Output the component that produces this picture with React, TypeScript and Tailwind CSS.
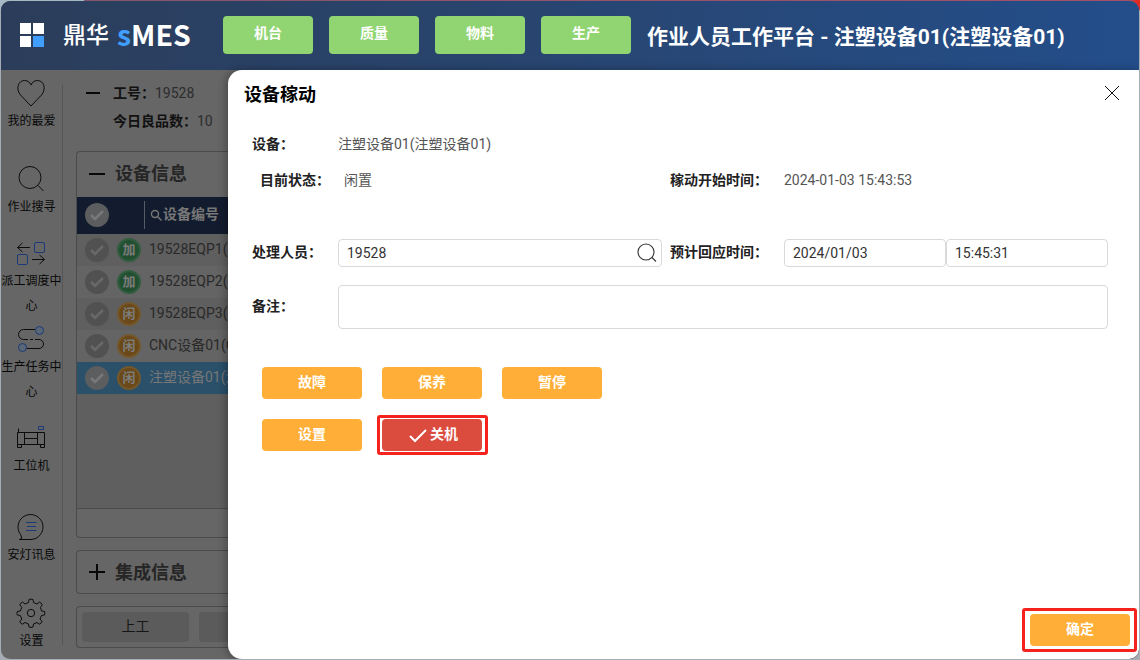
import type { ReactNode } from "react";

const navButtons = ["机台", "质量", "物料", "生产"];

const equipments = [
  { status: "加", name: "19528EQP1(" },
  { status: "加", name: "19528EQP2(" },
  { status: "闲", name: "19528EQP3(" },
  { status: "闲", name: "CNC设备01(C" },
  { status: "闲", name: "注塑设备01(注", selected: true },
];

const Icon = ({ children }: { children: ReactNode }) => (
  <svg className="mr-0.5 h-[30px] w-[30px] shrink-0 overflow-visible" viewBox="0 0 30 30" fill="none" stroke="#0c0c0c" strokeWidth="1">
    {children}
  </svg>
);

const sideItems = [
  {
    label: "我的最爱",
    height: "h-[86px]",
    icon: <path d="M15 28 4.500 17C-.500 11 2 2.500 8.500 2.500c3.500 0 5.500 2 6.500 4.500 1-2.500 3-4.500 6.500-4.500 6.500 0 9 8.500 4 14.500Z" />,
  },
  {
    label: "作业搜寻",
    height: "h-[74px]",
    icon: <><circle cx="14" cy="13.500" r="11" /><path d="m22 21.500 5.500 5.500" /></>,
  },
  {
    label: "派工调度中心",
    height: "h-[86px]",
    icon: (
      <>
        <path d="M14 9.500H1.500m5-4.500-5 4.500 5 4.500M16 21.500h12.500m-5-4.500 5 4.500-5 4.500" />
        <rect x="18.500" y="4.500" width="10" height="10" rx="1.500" stroke="#1c3a78" />
        <rect x="1.500" y="16.500" width="10" height="10" rx="1.500" stroke="#1c3a78" />
      </>
    ),
  },
  {
    label: "生产任务中心",
    height: "h-[99px]",
    icon: (
      <>
        <path d="M19 5.500H7.500a5 5 0 0 0 0 10H9M21 15.500h2a4.500 4.500 0 0 1 0 9H10" />
        <path d="M9 15.500h12" strokeDasharray="3 2" />
        <circle cx="23.500" cy="6.500" r="4" fill="#586675" stroke="#1c3a78" />
        <circle cx="6.500" cy="23.500" r="4" fill="#586675" stroke="#1c3a78" />
      </>
    ),
  },
  {
    label: "工位机",
    height: "h-[89px]",
    icon: (
      <>
        <path d="M1.500 9.500h27v12h-27ZM8.500 9.500v12M21.500 9.500v12M8.500 15.500h13M2.500 9.500v-4M1.500 21.500v3h4v-3M24.500 21.500v3h4v-3" />
        <path d="M22.500 3.500h5v3h-5Z" stroke="#1c3a78" />
      </>
    ),
  },
  {
    label: "安灯讯息",
    height: "h-[86px]",
    icon: (
      <>
        <path d="M4.500 22.500A12.500 12.500 0 1 1 15 27.500H3.500l2.500-1.500Z" />
        <path d="M10 10.500h10.500M11 14.500h9M10 18.500h10.500" stroke="#1c3a78" />
      </>
    ),
  },
  {
    label: "设置",
    height: "h-[54px]",
    // eight round teeth
    icon: (
      <>
        <path
          d="M12.500 4.500 13 1.500q2-.800 4 0l.500 3 3.500 1.500 2.500-2q2 .900 2.700 2.800l-1.700 2.700 1 3.500 3 .500q.800 1.500 0 3.500l-3 .500-1.500 3.500 2 2.700q-.900 2-2.700 2.500l-2.300-1.700-3.500 1.500-.500 3q-2 .800-4 0l-.500-3L9 24.500l-2.500 1.700q-2-.700-2.700-2.500l2-2.700L4.300 17.500l-3-.500q-.800-1.500 0-3.500l3-.500L5.800 9.500l-2-2.700q.700-2 2.700-2.800L9 6Z"
          strokeLinejoin="round"
        />
        <circle cx="15" cy="15" r="3.700" />
      </>
    ),
  },
];

const CheckCircle = ({ selected }: { selected?: boolean }) => (
  <svg className="h-6 w-6 shrink-0" viewBox="0 0 24 24">
    <circle cx="12" cy="12" r="12" fill={selected ? "#5b5d5f" : "#515151"} />
    <path d="m6 12 4 4 8-8" fill="none" stroke={selected ? "#777879" : "#686868"} strokeWidth="2.600" />
  </svg>
);

const Sidebar = () => (
  <aside className="flex w-[62px] shrink-0 pt-[15px] pb-[14px]">
    <div className="-mt-[7px] flex w-[61px] shrink-0 flex-col">
      {sideItems.map(item => (
        <div key={item.label} className={`flex shrink-0 flex-col items-center ${item.height}`}>
          <Icon>{item.icon}</Icon>
          <p className="mt-px w-[60px] text-center text-[12px] leading-[25px] text-[#080808]">{item.label}</p>
        </div>
      ))}
    </div>
    <div className="w-px bg-[#555]" />
  </aside>
);

const EquipmentCard = () => (
  <section className="mt-4 flex h-[387px] shrink-0 flex-col overflow-hidden rounded-l border border-r-0 border-[#4b4b4b]">
    <div className="flex h-[45px] shrink-0 items-center pb-px pl-3">
      <span className="h-0.5 w-4 bg-[#080808]" />
      <h2 className="ml-[10px] pb-px text-[18px] font-bold text-[#262626]">设备信息</h2>
    </div>
    <div className="flex h-[37px] shrink-0 items-center bg-[#121c2e] pb-px pl-2">
      <CheckCircle selected />
      <span className="ml-[35px] h-7 w-px bg-[#555c68]" />
      <svg className="ml-[5px] h-3 w-3" viewBox="0 0 12 12" fill="none" stroke="#777" strokeWidth="1.400">
        <circle cx="5" cy="5" r="3.500" />
        <path d="m7.500 7.500 4 4" />
      </svg>
      <span className="ml-px pb-px text-[14px] font-bold text-[#777]">设备编号</span>
    </div>
    <div className="h-[274px] shrink-0 bg-[#5f5f5f]">
      {equipments.map(row => (
        <div
          key={row.name}
          className={`flex h-8 items-center pl-2 text-[14px] whitespace-nowrap ${row.selected ? "bg-[#2a506a] text-[#777]" : "text-[#292929] odd:bg-[#5f5f5f] even:bg-[#646464]"}`}
        >
          <CheckCircle selected={row.selected} />
          <span className={`ml-2 flex h-6 w-6 shrink-0 items-center justify-center rounded-full border-2 text-[13px] font-bold text-[#7c7c7c] ${row.status === "加" ? "border-[#315d3f] bg-[#234f31]" : "border-[#74582c] bg-[#6a4817]"}`}>
            {row.status}
          </span>
          <span className="ml-2 pb-0.5">{row.name}</span>
        </div>
      ))}
    </div>
    <div className="flex-1 border-t border-[#4b4b4b]" />
  </section>
);

const Workbench = () => (
  <main className="ml-[13px] flex w-[153px] shrink-0 flex-col overflow-hidden pt-[9px]">
    <div className="flex h-7 shrink-0 items-center pl-[10px] text-[14px]">
      <span className="h-0.5 w-[14px] bg-[#080808]" />
      <b className="ml-[13px] text-[#111]">工号：</b>
      <span className="text-[#2c2c2c]">19528</span>
    </div>
    <div className="flex h-7 shrink-0 items-center pl-[37px] text-[14px]">
      <b className="text-[#111]">今日良品数：</b>
      <span className="text-[#2c2c2c]">10</span>
    </div>
    <EquipmentCard />
    <section className="mt-3 flex h-11 shrink-0 items-center rounded-l border border-r-0 border-[#4b4b4b] pl-3">
      <svg className="h-4 w-4" viewBox="0 0 16 16" stroke="#080808" strokeWidth="2">
        <path d="M8 0v16M0 8h16" />
      </svg>
      <h2 className="ml-[10px] text-[18px] font-bold text-[#262626]">集成信息</h2>
    </section>
    <section className="mt-3 flex h-[42px] shrink-0 gap-[10px] overflow-hidden rounded-l border border-r-0 border-[#4b4b4b] p-[5px]">
      <button className="h-[30px] w-[107px] shrink-0 rounded bg-[#5b5b5b] pb-0.5 text-[14px] text-[#161616]">上工</button>
      <button className="h-[30px] w-[107px] shrink-0 rounded bg-[#5b5b5b]" />
    </section>
  </main>
);

const ActionButton = ({ children }: { children: ReactNode }) => (
  <button className="h-8 w-[100px] shrink-0 rounded bg-[#ffaf37] pb-0.5 text-[14px] font-bold text-white">{children}</button>
);

const Label = ({ children }: { children: ReactNode }) => (
  <span className="shrink-0 text-[14px] font-bold whitespace-nowrap text-[#222]">{children}</span>
);

const Field = ({ className, children }: { className: string; children?: ReactNode }) => (
  <div className={`flex shrink-0 items-center rounded border border-[#d9d9d9] pl-2 text-[14px] text-[#333] ${className}`}>{children}</div>
);

const StatusDialog = () => (
  <div className="absolute top-0 right-0 bottom-0 left-[227px] flex flex-col rounded-l-[14px] rounded-br-[10px] bg-white shadow-[-2px_0_8px_rgba(0,0,0,0.300)]">
    <div className="flex h-[48px] shrink-0 items-center justify-between pr-[19px] pl-4">
      <h1 className="text-[18px] font-bold text-black">设备稼动</h1>
      <svg className="mb-0.5 h-4 w-4" viewBox="0 0 16 16" stroke="#111" strokeWidth="1">
        <path d="m1 1 14 14M15 1 1 15" />
      </svg>
    </div>
    <div className="mt-[10px] flex h-8 items-center pl-6 text-[14px] text-[#555]">
      <div className="w-[86px]"><Label>设备：</Label></div>
      <span>注塑设备01(注塑设备01)</span>
    </div>
    <div className="mt-1 flex h-8 items-center pl-8 text-[14px] text-[#555]">
      <div className="w-[84px]"><Label>目前状态：</Label></div>
      <span className="w-[326px]">闲置</span>
      <div className="w-[114px]"><Label>稼动开始时间：</Label></div>
      <span>2024-01-03 15:43:53</span>
    </div>
    <div className="mt-[43px] flex h-7 items-center pl-6">
      <div className="w-[86px] pb-0.5"><Label>处理人员：</Label></div>
      <Field className="h-7 w-[324px] justify-between pr-1">
        19528
        <svg className="h-5 w-5" viewBox="0 0 20 20" fill="none" stroke="#333" strokeWidth="1.100">
          <circle cx="9" cy="9" r="8" />
          <path d="m15 14.500 4 4" />
        </svg>
      </Field>
      <div className="ml-2 w-[114px] pb-0.5"><Label>预计回应时间：</Label></div>
      <Field className="h-7 w-[162px]">2024/01/03</Field>
      <Field className="h-7 w-[162px]">15:45:31</Field>
    </div>
    <div className="mt-[18px] flex h-11 items-center pl-6">
      <div className="w-[86px] pb-0.5"><Label>备注：</Label></div>
      <Field className="h-11 w-[770px]" />
    </div>
    <div className="mt-[38px] flex gap-5 pl-[34px]">
      <ActionButton>故障</ActionButton>
      <ActionButton>保养</ActionButton>
      <ActionButton>暂停</ActionButton>
    </div>
    <div className="mt-4 flex h-10 items-center gap-[15px] pl-[34px]">
      <ActionButton>设置</ActionButton>
      <div className="flex h-10 w-[111px] items-center rounded-[3px] border-[3px] border-[#f5221d] pl-0.5">
        <button className="flex h-8 w-[100px] items-center justify-center gap-[3px] rounded bg-[#db4c3e] pb-0.5 pl-[3px] text-[14px] font-bold text-white">
          <svg className="mt-1 h-4 w-[18px]" viewBox="0 0 18 16" fill="none" stroke="#fff" strokeWidth="2">
            <path d="m1 8 5 5L17 2" />
          </svg>
          关机
        </button>
      </div>
    </div>
    <div className="mt-auto mr-[2px] mb-[7px] flex h-11 w-[115px] items-center self-end rounded-[3px] border-[3px] border-[#f5221d] pl-[5px]">
      <ActionButton>确定</ActionButton>
    </div>
  </div>
);

const App = () => {
  return (
    <div className="h-[660px] w-[1140px] overflow-hidden bg-[#a6adb5] bg-[linear-gradient(90deg,#a7b8c5_84px,#85566d_84px,#a45068_1130px,#e02b25_1136px)] bg-[length:100%_10px] bg-no-repeat p-px font-[Roboto,'Noto_Sans_CJK_SC',sans-serif]">
      <div className="flex h-full flex-col overflow-hidden rounded-[9px] bg-[#666]">
        <header className="flex h-[69px] shrink-0 items-center bg-linear-to-r from-[#2b3d5a] to-[#234e8a] text-white">
          <div className="ml-[19px] grid grid-cols-2 gap-[2px] pb-px">
            <span className="h-[11px] w-[11px] bg-white" />
            <span className="h-[11px] w-[11px] bg-white" />
            <span className="h-[11px] w-[11px] bg-white" />
            <span className="h-[11px] w-[11px] bg-[#409eff]" />
          </div>
          <span className="ml-[19px] text-[23px] leading-none font-medium">鼎华</span>
          <span className="ml-2 w-[75px] pb-0.5 font-['Noto_Sans_CJK_SC',sans-serif] text-[28.500px] leading-none font-bold whitespace-nowrap">
            <span className="text-[#409eff]">s</span>MES
          </span>
          <nav className="ml-[31px] flex gap-4 pb-0.5">
            {navButtons.map(name => (
              <button key={name} className="h-[38px] w-[90px] rounded bg-[#91d572] pb-0.5 text-[14px] font-bold">{name}</button>
            ))}
          </nav>
          <p className="ml-4 pt-1 text-[21px] font-bold whitespace-nowrap">作业人员工作平台 - 注塑设备01(注塑设备01)</p>
        </header>
        <div className="relative flex min-h-0 flex-1">
          <Sidebar />
          <Workbench />
          <StatusDialog />
        </div>
      </div>
    </div>
  );
};

export default App;
